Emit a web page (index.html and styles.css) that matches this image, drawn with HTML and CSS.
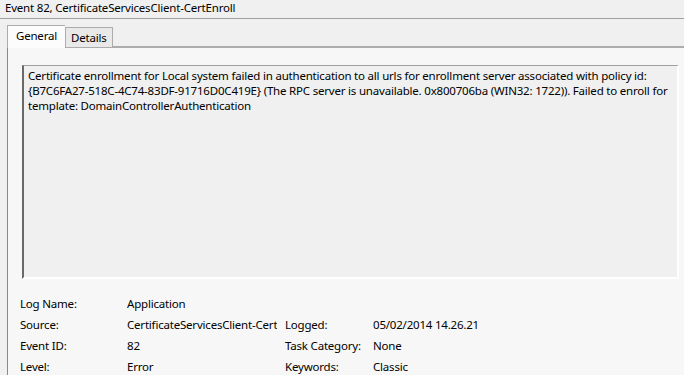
FILE: index.html
```html
<!DOCTYPE html>
<html lang="en">
<head>
    <meta charset="UTF-8">
    <title>Event 82</title>
    <link rel="stylesheet" href="styles.css">
</head>
<body>
    <!-- Header -->
    <div class="title">Event 82, CertificateServicesClient-CertEnroll</div>

    <div class="sheet">
        <!-- Tabs -->
        <div class="tabstrip">
            <div class="tab active">General</div>
            <div class="tab">Details</div>
            <div class="tab-fill"></div>
        </div>

        <!-- General panel -->
        <div class="panel">
            <div class="message">Certificate enrollment for Local system failed in authentication to all urls for enrollment server associated with policy id: {B7C6FA27-518C-4C74-83DF-91716D0C419E} (The RPC server is unavailable. 0x800706ba (WIN32: 1722)). Failed to enroll for template: DomainControllerAuthentication</div>

            <div class="fields">
                <div class="label">Log Name:</div>
                <div class="value">Application</div>
                <div></div>
                <div></div>

                <div class="label">Source:</div>
                <div class="value clip">CertificateServicesClient-CertEnroll</div>
                <div class="label">Logged:</div>
                <div class="value">05/02/2014 14.26.21</div>

                <div class="label">Event ID:</div>
                <div class="value">82</div>
                <div class="label">Task Category:</div>
                <div class="value">None</div>

                <div class="label">Level:</div>
                <div class="value">Error</div>
                <div class="label">Keywords:</div>
                <div class="value">Classic</div>
            </div>
        </div>
    </div>
</body>
</html>
```

FILE: styles.css
```css
body {
    margin: 0;
    font-family: 'Noto Sans', 'Open Sans', sans-serif;
    font-size: 11.5px;
    letter-spacing: -0.2px;
    color: #000;
    background-color: #f0f0f0;
    overflow: hidden;
    height: 375px;
}

/* Header */
.title {
    height: 18px;
    line-height: 16px;
    padding-left: 5px;
    border-bottom: 1px solid #a0a0a0;
}

/* Tabs */
.sheet {
    padding-left: 7px;
    padding-top: 6px;
}

.tabstrip {
    display: flex;
    align-items: flex-end;
    height: 22px;
}

.tab {
    height: 19px;
    line-height: 19px;
    padding: 0 5px;
    border: 1px solid #acacac;
    border-bottom: none;
    background-color: #e9e9e9;
}

.tab.active {
    height: 22px;
    line-height: 20px;
    padding: 0 8px;
    background-color: #fcfcfc;
    border-right: none;
    position: relative;
    z-index: 1;
    margin-bottom: -1px;
}

.tab-fill {
    flex: 1;
    border-bottom: 1px solid #acacac;
}

/* Panel */
.panel {
    border-left: 1px solid #898989;
    border-top: 1px solid #acacac;
    background-color: #f7f7f7;
    height: 310px;
    padding: 17px 0 0 14px;
}

.message {
    width: 648px;
    height: 207px;
    padding: 2px 1px 2px 4px;
    line-height: 15px;
    border-top: 1px solid #a0a0a0;
    border-left: 2px solid #696969;
    border-right: 2px solid #fff;
    border-bottom: 2px solid #fff;
    background-color: #f0f0f0;
}

.fields {
    display: grid;
    grid-template-columns: 107px 158px 88px auto;
    grid-auto-rows: 21px;
    align-items: center;
    margin-top: 14px;
    margin-left: -2px;
}

.clip {
    overflow: hidden;
    white-space: nowrap;
    width: 150px;
}
```
